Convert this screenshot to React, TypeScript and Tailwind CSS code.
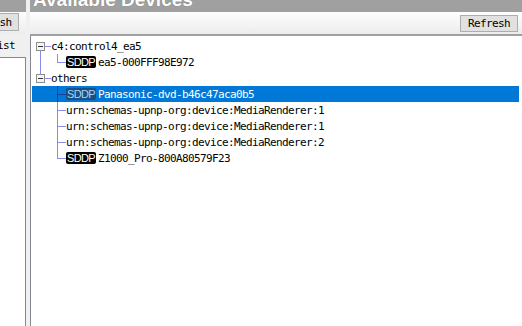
import React from "react";

const mono = "font-['DejaVu_Sans_Mono',monospace] text-[11px] tracking-[-0.62px] leading-none";

const Badge = ({ selected }: { selected?: boolean }) => (
    <span
        className={
            "inline-flex items-center justify-center h-[12px] w-[30px] rounded-[2px] font-['Liberation_Sans',Arial,sans-serif] text-[11px] leading-none " +
            (selected ? "bg-[#1b4f80] text-[#a3d3ff]" : "bg-black text-white")
        }
    >
        SDDP
    </span>
);

const TreeLines = () => {
    const c = "#8a8af5";
    const boxes = [10, 42];
    return (
        <svg className="absolute left-0 top-0 pointer-events-none" width="60" height="140" shapeRendering="crispEdges">
            {/* trunk between the two root nodes */}
            <line x1="9.5" y1="14" x2="9.5" y2="38" stroke={c} />
            {/* c4 child */}
            <line x1="26.5" y1="18" x2="26.5" y2="26.5" stroke={c} />
            <line x1="26" y1="26.5" x2="35" y2="26.5" stroke={c} />
            {/* others children */}
            <line x1="26.5" y1="50" x2="26.5" y2="122.5" stroke={c} />
            {[74, 90, 106, 122].map((y) => (
                <line key={y} x1="26" y1={y + 0.5} x2="35" y2={y + 0.5} stroke={c} />
            ))}
            <line x1="26.5" y1="50" x2="26.5" y2="66" stroke="#1d3f9e" />
            <line x1="26" y1="58.5" x2="35" y2="58.5" stroke="#1d3f9e" />
            {boxes.map((y) => (
                <g key={y}>
                    <line x1="14" y1={y + 0.5} x2="20" y2={y + 0.5} stroke={c} />
                    <rect x="5.5" y={y - 3.5} width="8" height="8" fill="#f4f4f4" stroke="#8c8c8c" />
                    <line x1="7" y1={y + 0.5} x2="12" y2={y + 0.5} stroke="#333" />
                </g>
            ))}
        </svg>
    );
};

export default function App() {
    const urn = "urn:schemas-upnp-org:device:MediaRenderer:";
    return (
        <div className="flex w-[522px] h-[326px] overflow-hidden bg-[#f0f0f0]">
            {/* left panel */}
            <div className="flex flex-col w-[26px] shrink-0">
                <div className="h-[12px] bg-[#a0a0a0]" />
                <div className="h-[22px] bg-gradient-to-b from-[#fdfdfd] to-[#ededed] overflow-hidden">
                    <div className={"ml-[-38px] mt-[1px] h-[18px] w-[57px] flex items-center justify-center bg-[#e1e1e1] border border-[#adadad] text-black " + mono}>
                        Refresh
                    </div>
                </div>
                <div className="h-[23px] flex items-center overflow-hidden">
                    <div className={"ml-[-9px] text-black " + mono}>List</div>
                </div>
                <div className="flex-1 bg-white border-t border-r border-[#828790]" />
            </div>

            <div className="w-[4px] shrink-0" />

            {/* right panel */}
            <div className="flex flex-col flex-1 min-w-0">
                <div className="h-[12px] bg-[#a0a0a0] overflow-hidden">
                    <div className="mt-[-10px] ml-[3px] font-['Liberation_Sans',Arial,sans-serif] font-bold text-[19px] leading-none text-white whitespace-nowrap [text-shadow:0_0_1px_#6a6a6a]">
                        Available Devices
                    </div>
                </div>
                <div className="h-[22px] flex items-start justify-end pr-[4px] bg-gradient-to-b from-[#fefefe] to-[#ececec] border-b-2 border-[#a0a0a0] box-content">
                    <button className={"mt-[3px] h-[17px] w-[58px] flex items-center justify-center bg-[#e1e1e1] border border-[#adadad] text-black " + mono}>
                        Refresh
                    </button>
                </div>
                <div className="relative flex-1 bg-white border-l border-[#828790] pt-[2px] pr-[3px]">
                    <TreeLines />
                    <div className={"h-[16px] flex items-center pl-[20px] text-black " + mono}>c4:control4_ea5</div>
                    <div className={"h-[16px] flex items-center gap-[2px] pl-[35px] text-black " + mono}>
                        <Badge />
                        <span>ea5-000FFF98E972</span>
                    </div>
                    <div className={"h-[16px] flex items-center pl-[20px] text-black " + mono}>others</div>
                    <div className={"h-[16px] ml-[1px] flex items-center gap-[2px] pl-[34px] bg-[#0078d7] text-white " + mono}>
                        <Badge selected />
                        <span>Panasonic-dvd-b46c47aca0b5</span>
                    </div>
                    {["1", "1", "2"].map((n, i) => (
                        <div key={i} className={"h-[16px] flex items-center pl-[35px] text-black " + mono}>
                            {urn + n}
                        </div>
                    ))}
                    <div className={"h-[16px] flex items-center gap-[2px] pl-[35px] text-black " + mono}>
                        <Badge />
                        <span>Z1000_Pro-800A80579F23</span>
                    </div>
                </div>
            </div>
        </div>
    );
}
